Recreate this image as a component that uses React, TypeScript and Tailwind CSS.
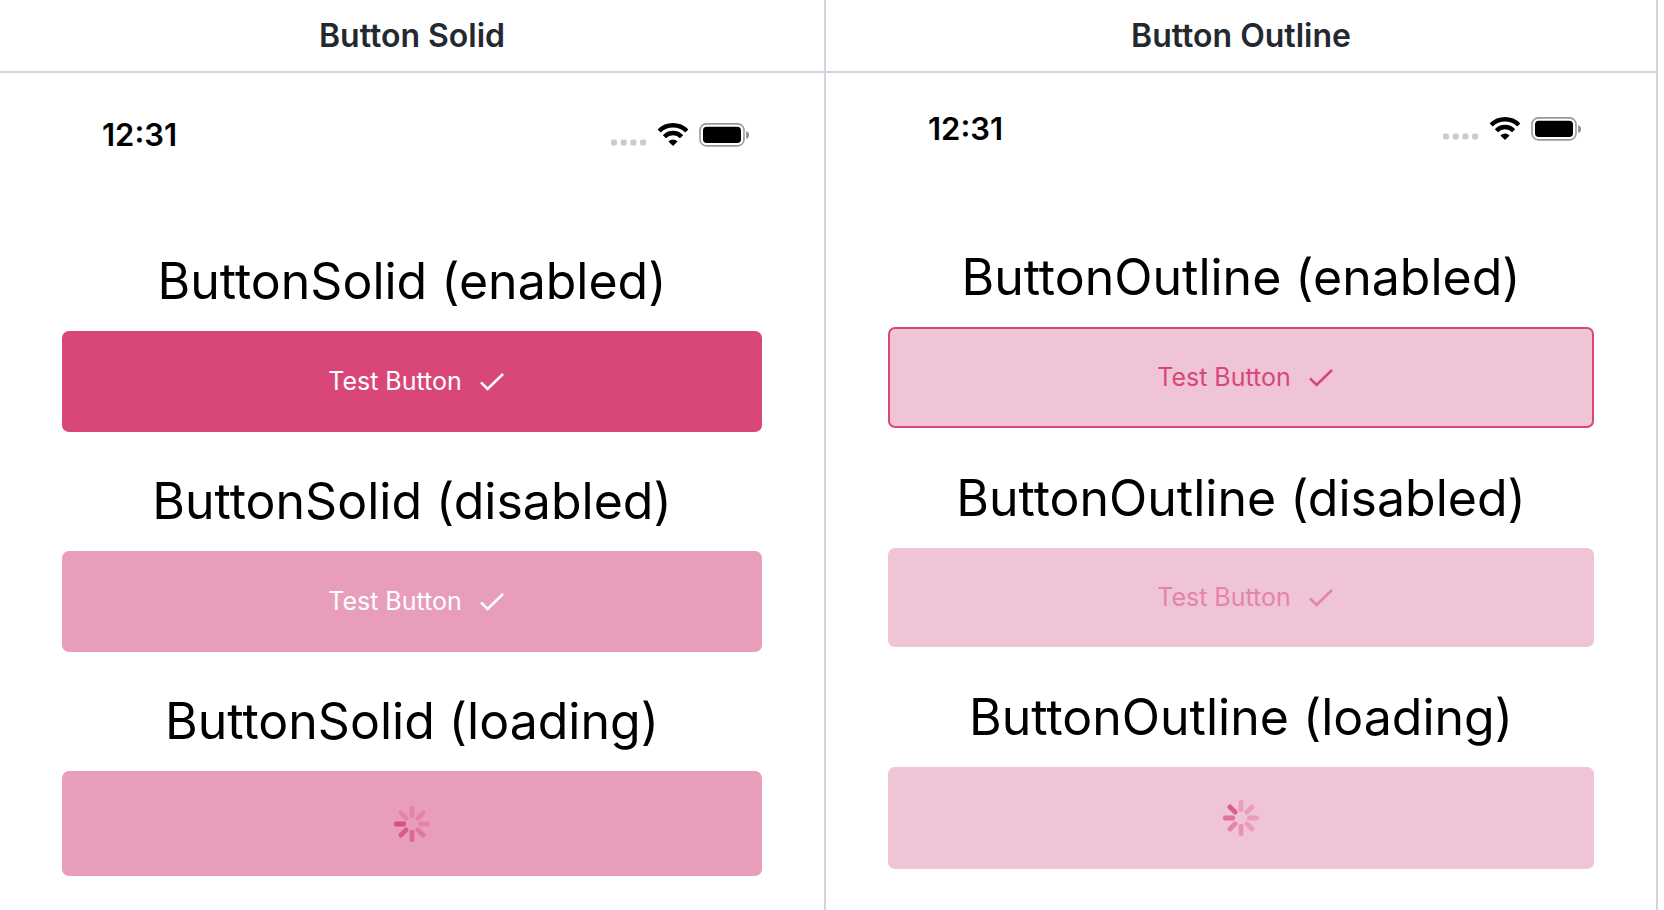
type Variant = "solid" | "outline";
type State = "enabled" | "disabled" | "loading";

const SPINNER_SOLID = ["#e583a9", "#e583a9", "#e583a9", "#e2769f", "#df6797", "#dc5a8b", "#db4f85", "#e583a9"];
const SPINNER_OUTLINE = ["#eb9dbd", "#eb9dbd", "#eb9dbd", "#eb9dbd", "#e893b4", "#e583a9", "#e2729d", "#de5c8d"];

function Spinner({ colors }: { colors: string[] }) {
  return (
    <svg className="size-9" viewBox="-18 -18 36 36" aria-hidden="true">
      {colors.map((color, i) => (
        <rect key={i} x="-2.4" y="-18" width="4.8" height="12" rx="2" fill={color} transform={`rotate(${i * 45})`} />
      ))}
    </svg>
  );
}

function Check() {
  return (
    <svg className="h-[18px] w-6" viewBox="0 0 24 18" fill="none" stroke="currentColor" strokeWidth="2.6" aria-hidden="true">
      <path d="M1 9.4 7.6 16 23 1" />
    </svg>
  );
}

function StatusIcons() {
  return (
    <svg className="h-6 w-[138px]" viewBox="0 0 138 24" aria-hidden="true">
      <g fill="#cbcbcb">
        <rect x="0" y="16.5" width="6" height="6" rx="1.8" />
        <rect x="9.7" y="16.5" width="6" height="6" rx="1.8" />
        <rect x="19.4" y="16.5" width="6" height="6" rx="1.8" />
        <rect x="29.1" y="16.5" width="6" height="6" rx="1.8" />
      </g>
      <g fill="none" stroke="#000" strokeWidth="4.4">
        <path d="M48.2 8A19.4 19.4 0 0 1 75.8 8" />
        <path d="M53.4 13.7A12 12 0 0 1 70.6 13.7" />
      </g>
      <path d="M62 23 57.4 18.4A6.5 6.5 0 0 1 66.6 18.4Z" fill="#000" />
      <rect x="89" y="0.9" width="44" height="22" rx="6.4" fill="none" stroke="#999" strokeWidth="1.6" />
      <rect x="92" y="3.7" width="38" height="16.4" rx="3.8" fill="#000" />
      <path d="M135.2 8Q138 9 138 12T135.2 16Z" fill="#8c8c8c" />
    </svg>
  );
}

const buttonStyles: Record<Variant, Record<State, string>> = {
  solid: {
    enabled: "h-[101px] bg-[#d94778] text-white",
    disabled: "h-[101px] bg-[#e89dbb] text-white",
    loading: "h-[105px] bg-[#e89dbb]",
  },
  outline: {
    enabled: "h-[101px] border-2 border-[#d94778] bg-[#efc4d6] text-[#d94778]",
    disabled: "h-[99px] bg-[#efc4d6] text-[#e683a9]",
    loading: "h-[102px] bg-[#efc4d6]",
  },
};

function DemoButton({ variant, state }: { variant: Variant; state: State }) {
  return (
    <button
      type="button"
      disabled={state !== "enabled"}
      aria-label={state === "loading" ? "Loading" : undefined}
      className={`flex w-full items-center justify-center rounded-[7px] text-[25px] ${buttonStyles[variant][state]}`}
    >
      {state === "loading" ? (
        <Spinner colors={variant === "solid" ? SPINNER_SOLID : SPINNER_OUTLINE} />
      ) : (
        <span className="flex items-center gap-[18px] pl-2">
          Test Button
          <Check />
        </span>
      )}
    </button>
  );
}

const states: State[] = ["enabled", "disabled", "loading"];

const panelStyles: Record<Variant, { body: string; list: string }> = {
  solid: { body: "pt-[42px]", list: "gap-[39px] pt-24" },
  outline: { body: "pt-9", list: "gap-10 pt-[98px]" },
};

function Panel({ title, name, variant }: { title: string; name: string; variant: Variant }) {
  return (
    <section className="flex flex-col border-r-2 border-[#d0d7de]">
      <h2 className="flex h-[73px] items-center justify-center border-b-2 border-[#d0d7de] text-[32px] font-semibold text-[#24292f]">
        {title}
      </h2>
      <div className={`px-[62px] ${panelStyles[variant].body}`}>
        <div className="flex h-10 items-center justify-between pl-10 pr-[13px]">
          <time className="text-[31px] font-semibold">12:31</time>
          <StatusIcons />
        </div>
        <div className={`flex flex-col ${panelStyles[variant].list}`}>
          {states.map((state) => (
            <div key={state} className="flex flex-col gap-5">
              <h3 className="whitespace-nowrap text-center text-[50px] leading-[60px]">
                {name} ({state})
              </h3>
              <DemoButton variant={variant} state={state} />
            </div>
          ))}
        </div>
      </div>
    </section>
  );
}

export default function App() {
  return (
    <main className="min-h-screen bg-white pr-[6px] font-['Inter','Liberation_Sans',sans-serif] text-black">
      <div className="grid min-h-screen grid-cols-[826fr_832fr]">
        <Panel title="Button Solid" name="ButtonSolid" variant="solid" />
        <Panel title="Button Outline" name="ButtonOutline" variant="outline" />
      </div>
    </main>
  );
}
